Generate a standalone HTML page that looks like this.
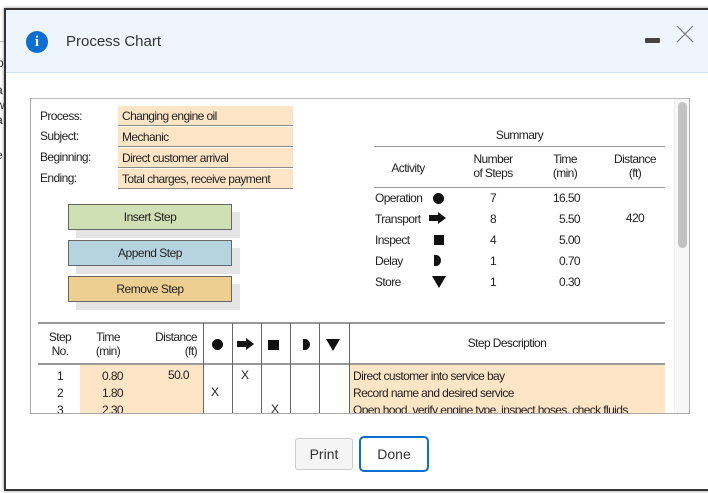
<!DOCTYPE html>
<html><head><meta charset="utf-8"><style>
*{margin:0;padding:0;box-sizing:border-box}
body{width:708px;height:493px;background:#fff;position:relative;overflow:hidden;font-family:"Liberation Sans",sans-serif}
.a{position:absolute}
.t{font-size:12px;color:#222;letter-spacing:-0.6px;white-space:nowrap;line-height:14px}
.f{background:#fde5c6;border-bottom:1px solid #888}
.btn{position:absolute;border:1px solid #666;font-size:12px;letter-spacing:-0.5px;text-align:center;line-height:24px;color:#222}
.sh{position:absolute;background:#e4e4e4}
.c{text-align:center}
.vl{position:absolute;width:1px;background:#666;top:323px;height:90px}
</style></head><body>
<div class="a" style="left:0;top:0;width:708px;height:8px;background:#fff"></div>
<div class="a t" style="left:-3px;top:56px;font-size:12px">p</div>
<div class="a t" style="left:-4px;top:83px">a</div>
<div class="a t" style="left:-4px;top:98px">w</div>
<div class="a t" style="left:-4px;top:113px">a</div>
<div class="a t" style="left:-4px;top:148px">e</div>
<div class="a" style="left:0;top:41px;width:5px;height:1px;background:#bbb"></div>
<div class="a" style="left:4px;top:8px;width:720px;height:483px;background:#fff;border:2px solid #333;border-right:none;box-shadow:0 0 3px #888"></div>
<div class="a" style="left:6px;top:10px;width:702px;height:63px;background:#eef5fd;border-bottom:1px solid #cfe0ef"></div>
<div class="a" style="left:26px;top:31px;width:22px;height:22px;border-radius:50%;background:#0a6fd0;color:#fff;font:bold 15px/22px 'Liberation Serif',serif;text-align:center">i</div>
<div class="a" style="left:66px;top:33px;font-size:15px;color:#333">Process Chart</div>
<div class="a" style="left:645px;top:38px;width:15px;height:5px;background:#444;border-radius:1px"></div>
<svg class="a" style="left:676px;top:25px" width="18" height="18"><path d="M1 1L17 17M17 1L1 17" stroke="#777" stroke-width="1.2"/></svg>
<div class="a" style="left:30px;top:98px;width:660px;height:316px;border:1px solid #aaa;border-top-color:#bbb;overflow:hidden"></div>
<div class="a" style="left:674px;top:99px;width:15px;height:314px;background:#f7f7f7;border-left:1px solid #eee"></div>
<div class="a" style="left:678px;top:102px;width:9px;height:146px;background:#c2c2c2;border-radius:5px"></div>
<div class="a t" style="left:40px;top:109px">Process:</div>
<div class="a t" style="left:40px;top:129px">Subject:</div>
<div class="a t" style="left:40px;top:150px">Beginning:</div>
<div class="a t" style="left:40px;top:171px">Ending:</div>
<div class="a f t" style="left:118px;top:106px;width:175px;height:20px;padding:3px 4px">Changing engine oil</div>
<div class="a f t" style="left:118px;top:127px;width:175px;height:20px;padding:3px 4px">Mechanic</div>
<div class="a f t" style="left:118px;top:148px;width:175px;height:20px;padding:3px 4px">Direct customer arrival</div>
<div class="a f t" style="left:118px;top:169px;width:175px;height:20px;padding:3px 4px">Total charges, receive payment</div>
<div class="sh" style="left:76px;top:212px;width:164px;height:26px"></div>
<div class="btn" style="left:68px;top:204px;width:164px;height:26px;background:#cfe0b4">Insert Step</div>
<div class="sh" style="left:76px;top:248px;width:164px;height:26px"></div>
<div class="btn" style="left:68px;top:240px;width:164px;height:26px;background:#b6d3e0">Append Step</div>
<div class="sh" style="left:76px;top:284px;width:164px;height:26px"></div>
<div class="btn" style="left:68px;top:276px;width:164px;height:26px;background:#edcf91">Remove Step</div>
<div class="a t c" style="left:374px;top:128px;width:291px">Summary</div>
<div class="a" style="left:374px;top:146px;width:291px;height:1px;background:#999"></div>
<div class="a t c" style="left:370px;top:161px;width:76px">Activity</div>
<div class="a t c" style="left:458px;top:152px;width:70px">Number<br>of Steps</div>
<div class="a t c" style="left:540px;top:152px;width:50px">Time<br>(min)</div>
<div class="a t c" style="left:605px;top:152px;width:60px">Distance<br>(ft)</div>
<div class="a" style="left:374px;top:187px;width:291px;height:1px;background:#999"></div>
<div class="a t" style="left:375px;top:188px;line-height:21px">Operation<br>Transport<br>Inspect<br>Delay<br>Store</div>
<div class="a" style="left:433px;top:193px;width:11px;height:11px;border-radius:50%;background:#111"></div>
<svg class="a" style="left:429px;top:212px" width="18" height="12"><path d="M0 3H9V0L17 6L9 12V9H0Z" fill="#111"/></svg>
<div class="a" style="left:434px;top:235px;width:10px;height:10px;background:#111"></div>
<svg class="a" style="left:434px;top:255px" width="8" height="11"><path d="M0 0H2A5 5.5 0 0 1 2 11H0Z" fill="#111"/></svg>
<svg class="a" style="left:432px;top:276px" width="14" height="12"><path d="M0 0H14L7 12Z" fill="#111"/></svg>
<div class="a t c" style="left:473px;top:188px;width:40px;line-height:21px">7<br>8<br>4<br>1<br>1</div>
<div class="a t" style="left:548px;top:188px;width:32px;line-height:21px;text-align:right">16.50<br>5.50<br>5.00<br>0.70<br>0.30</div>
<div class="a t c" style="left:615px;top:211px;width:40px">420</div>
<div class="a" style="left:80px;top:364px;width:123px;height:49px;background:#fde5c6"></div>
<div class="a" style="left:349px;top:364px;width:316px;height:49px;background:#fde5c6"></div>
<div class="a" style="left:38px;top:322px;width:627px;height:2px;background:#999"></div>
<div class="a" style="left:38px;top:363px;width:627px;height:2px;background:#999"></div>
<div class="vl" style="left:203px"></div><div class="vl" style="left:232px"></div><div class="vl" style="left:261px"></div><div class="vl" style="left:290px"></div><div class="vl" style="left:319px"></div><div class="vl" style="left:349px"></div>
<div class="a t c" style="left:45px;top:330px;width:30px">Step<br>No.</div>
<div class="a t c" style="left:88px;top:330px;width:40px">Time<br>(min)</div>
<div class="a t" style="left:140px;top:330px;width:57px;text-align:right">Distance<br>(ft)</div>
<div class="a" style="left:212px;top:339px;width:11px;height:11px;border-radius:50%;background:#111"></div>
<svg class="a" style="left:237px;top:338px" width="18" height="12"><path d="M0 3H9V0L17 6L9 12V9H0Z" fill="#111"/></svg>
<div class="a" style="left:268px;top:340px;width:11px;height:10px;background:#111"></div>
<svg class="a" style="left:303px;top:339px" width="8" height="11"><path d="M0 0H2A5 5.5 0 0 1 2 11H0Z" fill="#111"/></svg>
<svg class="a" style="left:326px;top:339px" width="14" height="12"><path d="M0 0H14L7 12Z" fill="#111"/></svg>
<div class="a t c" style="left:349px;top:336px;width:316px">Step Description</div>
<div class="a" style="left:31px;top:365px;width:643px;height:48px;overflow:hidden">
<div class="a t c" style="left:14px;top:3px;width:30px;line-height:17px">1<br>2<br>3</div>
<div class="a t" style="left:60px;top:3px;width:32px;text-align:right;line-height:17px">0.80<br>1.80<br>2.30</div>
<div class="a t" style="left:128px;top:3px;width:30px;text-align:right">50.0</div>
<div class="a t" style="left:210px;top:3px">X</div>
<div class="a t" style="left:180px;top:20px">X</div>
<div class="a t" style="left:240px;top:37px">X</div>
<div class="a t" style="left:322px;top:3px;line-height:17px">Direct customer into service bay<br>Record name and desired service<br>Open hood, verify engine type, inspect hoses, check fluids</div>
</div>
<div class="a" style="left:295px;top:438px;width:58px;height:32px;border:1px solid #ccc;border-radius:3px;background:#f5f5f5;font-size:14px;line-height:30px;text-align:center;color:#333">Print</div>
<div class="a" style="left:359px;top:436px;width:70px;height:36px;border:2px solid #0a6fd0;border-radius:5px;background:#fff;font-size:14px;line-height:32px;text-align:center;color:#333">Done</div>
</body></html>
